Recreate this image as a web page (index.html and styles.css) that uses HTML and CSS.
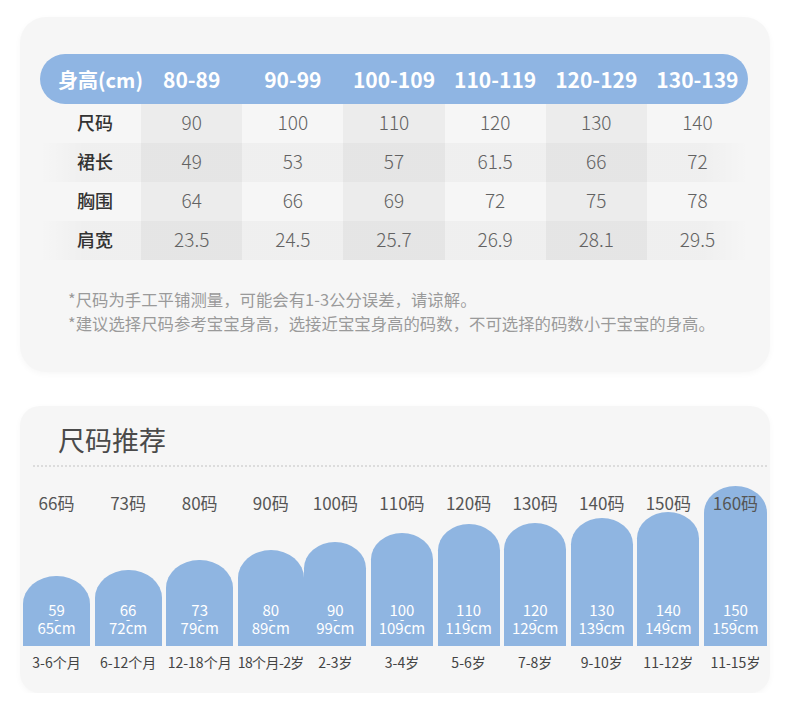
FILE: index.html
```html
<!DOCTYPE html>
<html lang="zh-CN">
<head>
<meta charset="utf-8">
<title>尺码表</title>
<link rel="stylesheet" href="styles.css">
</head>
<body>
<div class="page">
  <section class="card card-table">
    <div class="table">
      <div class="thead">
        <div class="th th-label">身高(cm)</div>
        <div class="th">80-89</div>
        <div class="th">90-99</div>
        <div class="th">100-109</div>
        <div class="th">110-119</div>
        <div class="th">120-129</div>
        <div class="th">130-139</div>
      </div>
      <div class="row">
        <div class="rl">尺码</div>
        <div class="cell">90</div><div class="cell">100</div><div class="cell">110</div><div class="cell">120</div><div class="cell">130</div><div class="cell">140</div>
      </div>
      <div class="row row-band">
        <div class="rl">裙长</div>
        <div class="cell">49</div><div class="cell">53</div><div class="cell">57</div><div class="cell">61.5</div><div class="cell">66</div><div class="cell">72</div>
      </div>
      <div class="row">
        <div class="rl">胸围</div>
        <div class="cell">64</div><div class="cell">66</div><div class="cell">69</div><div class="cell">72</div><div class="cell">75</div><div class="cell">78</div>
      </div>
      <div class="row row-band">
        <div class="rl">肩宽</div>
        <div class="cell">23.5</div><div class="cell">24.5</div><div class="cell">25.7</div><div class="cell">26.9</div><div class="cell">28.1</div><div class="cell">29.5</div>
      </div>
    </div>
    <div class="notes">
      <p>*尺码为手工平铺测量，可能会有1-3公分误差，请谅解。</p>
      <p>*建议选择尺码参考宝宝身高，选接近宝宝身高的码数，不可选择的码数小于宝宝的身高。</p>
    </div>
  </section>

  <section class="card card-rec">
    <h2 class="title">尺码推荐</h2>
    <div class="dots"></div>
    <div class="chart">
      <div class="col"><div class="stack"><div class="lbl">66码</div><div class="bar" style="height:70px"><span>59</span><span class="dash">-</span><span>65cm</span></div></div><div class="age">3-6个月</div></div>
      <div class="col"><div class="stack"><div class="lbl">73码</div><div class="bar" style="height:76px"><span>66</span><span class="dash">-</span><span>72cm</span></div></div><div class="age">6-12个月</div></div>
      <div class="col"><div class="stack"><div class="lbl">80码</div><div class="bar" style="height:86px"><span>73</span><span class="dash">-</span><span>79cm</span></div></div><div class="age">12-18个月</div></div>
      <div class="col"><div class="stack"><div class="lbl">90码</div><div class="bar" style="height:96px"><span>80</span><span class="dash">-</span><span>89cm</span></div></div><div class="age age-tight">18个月-2岁</div></div>
      <div class="col"><div class="stack"><div class="lbl">100码</div><div class="bar" style="height:104px"><span>90</span><span class="dash">-</span><span>99cm</span></div></div><div class="age">2-3岁</div></div>
      <div class="col"><div class="stack"><div class="lbl">110码</div><div class="bar" style="height:113px"><span>100</span><span class="dash">-</span><span>109cm</span></div></div><div class="age">3-4岁</div></div>
      <div class="col"><div class="stack"><div class="lbl">120码</div><div class="bar" style="height:122px"><span>110</span><span class="dash">-</span><span>119cm</span></div></div><div class="age">5-6岁</div></div>
      <div class="col"><div class="stack"><div class="lbl">130码</div><div class="bar" style="height:123px"><span>120</span><span class="dash">-</span><span>129cm</span></div></div><div class="age">7-8岁</div></div>
      <div class="col"><div class="stack"><div class="lbl">140码</div><div class="bar" style="height:128px"><span>130</span><span class="dash">-</span><span>139cm</span></div></div><div class="age">9-10岁</div></div>
      <div class="col"><div class="stack"><div class="lbl">150码</div><div class="bar" style="height:134px"><span>140</span><span class="dash">-</span><span>149cm</span></div></div><div class="age">11-12岁</div></div>
      <div class="col"><div class="stack"><div class="lbl">160码</div><div class="bar" style="height:160px"><span>150</span><span class="dash">-</span><span>159cm</span></div></div><div class="age">11-15岁</div></div>
    </div>
  </section>
</div>
</body>
</html>
```

FILE: styles.css
```css
* { box-sizing: border-box; }
html, body { margin: 0; padding: 0; background: #fff; }
body {
  font-family: "Noto Sans CJK SC", "Noto Sans", sans-serif;
  color: #444;
  width: 790px;
}
.page { padding-top: 17px; }

.card {
  margin: 0 20px;
  background: #f6f6f6;
  box-shadow: 0 2px 6px rgba(0, 0, 0, 0.035);
}

/* ---------- size table card ---------- */
.card-table {
  height: 355px;
  border-radius: 26px;
  padding: 37px 22px 0 20px;
}
.table { width: 708px; }
.thead {
  display: grid;
  grid-template-columns: repeat(7, minmax(0, 1fr));
  height: 50px;
  background: #8fb5e3;
  border-radius: 25px;
  color: #fff;
  align-items: center;
}
.th {
  text-align: center;
  font-size: 21px;
  font-weight: 700;
  white-space: nowrap;
}
.th-label {
  font-size: 20px;
  padding-left: 18px;
  text-align: left;
}
.row {
  display: grid;
  grid-template-columns: repeat(7, minmax(0, 1fr));
  height: 39px;
}
.row-band {
  background: linear-gradient(90deg, rgba(0,0,0,0) 0%, rgba(0,0,0,0.028) 6%, rgba(0,0,0,0.028) 94%, rgba(0,0,0,0) 100%);
}
.rl, .cell {
  display: flex;
  align-items: center;
  justify-content: center;
  padding-bottom: 4px;
}
.rl {
  font-size: 18px;
  font-weight: 500;
  color: #333;
  padding-left: 9px;
}
.cell {
  font-size: 19px;
  font-weight: 300;
  color: #626262;
}
.cell:nth-child(even) { background: rgba(0, 0, 0, 0.04); }

.notes {
  margin-top: 27px;
  padding-left: 28px;
  color: #9a9a9a;
  font-size: 16.4px;
  line-height: 24px;
}
.notes p { margin: 0; white-space: nowrap; }

/* ---------- recommendation card ---------- */
.card-rec {
  margin-top: 34px;
  height: 287px;
  border-radius: 20px;
  padding: 17px 3px 0 3px;
}
.title {
  margin: 0;
  padding-left: 35px;
  font-size: 27px;
  line-height: 34px;
  font-weight: 400;
  color: #4a4a4a;
}
.dots {
  margin: 8px 0 0 10px;
  border-top: 2px dotted #dcdcdc;
}
.chart {
  margin-top: 19px;
  display: grid;
  grid-template-columns: 67px 67px 67px 62px 62px 62px 62px 62px 62px 62px 63px;
  column-gap: 4.6px;
}
.col {
  display: grid;
  grid-template-rows: 160px auto;
}
.stack { display: grid; }
.stack > * { grid-area: 1 / 1; }
.lbl {
  align-self: start;
  z-index: 1;
  margin-top: 6px;
  text-align: center;
  font-size: 17px;
  line-height: 22px;
  color: #555;
  white-space: nowrap;
}
.bar {
  align-self: end;
  display: flex;
  flex-direction: column;
  justify-content: flex-end;
  align-items: center;
  padding-bottom: 9px;
  background: #8fb5e1;
  border-radius: 33px 33px 0 0 / 28px 28px 0 0;
  color: #fff;
  font-size: 15px;
  line-height: 18px;
}
.bar .dash {
  height: 0;
  line-height: 0;
  font-size: 13px;
}
.age {
  display: flex;
  justify-content: center;
  margin-top: 6px;
  font-size: 14px;
  line-height: 20px;
  color: #444;
  white-space: nowrap;
}
.age-tight { letter-spacing: -0.6px; }
```
